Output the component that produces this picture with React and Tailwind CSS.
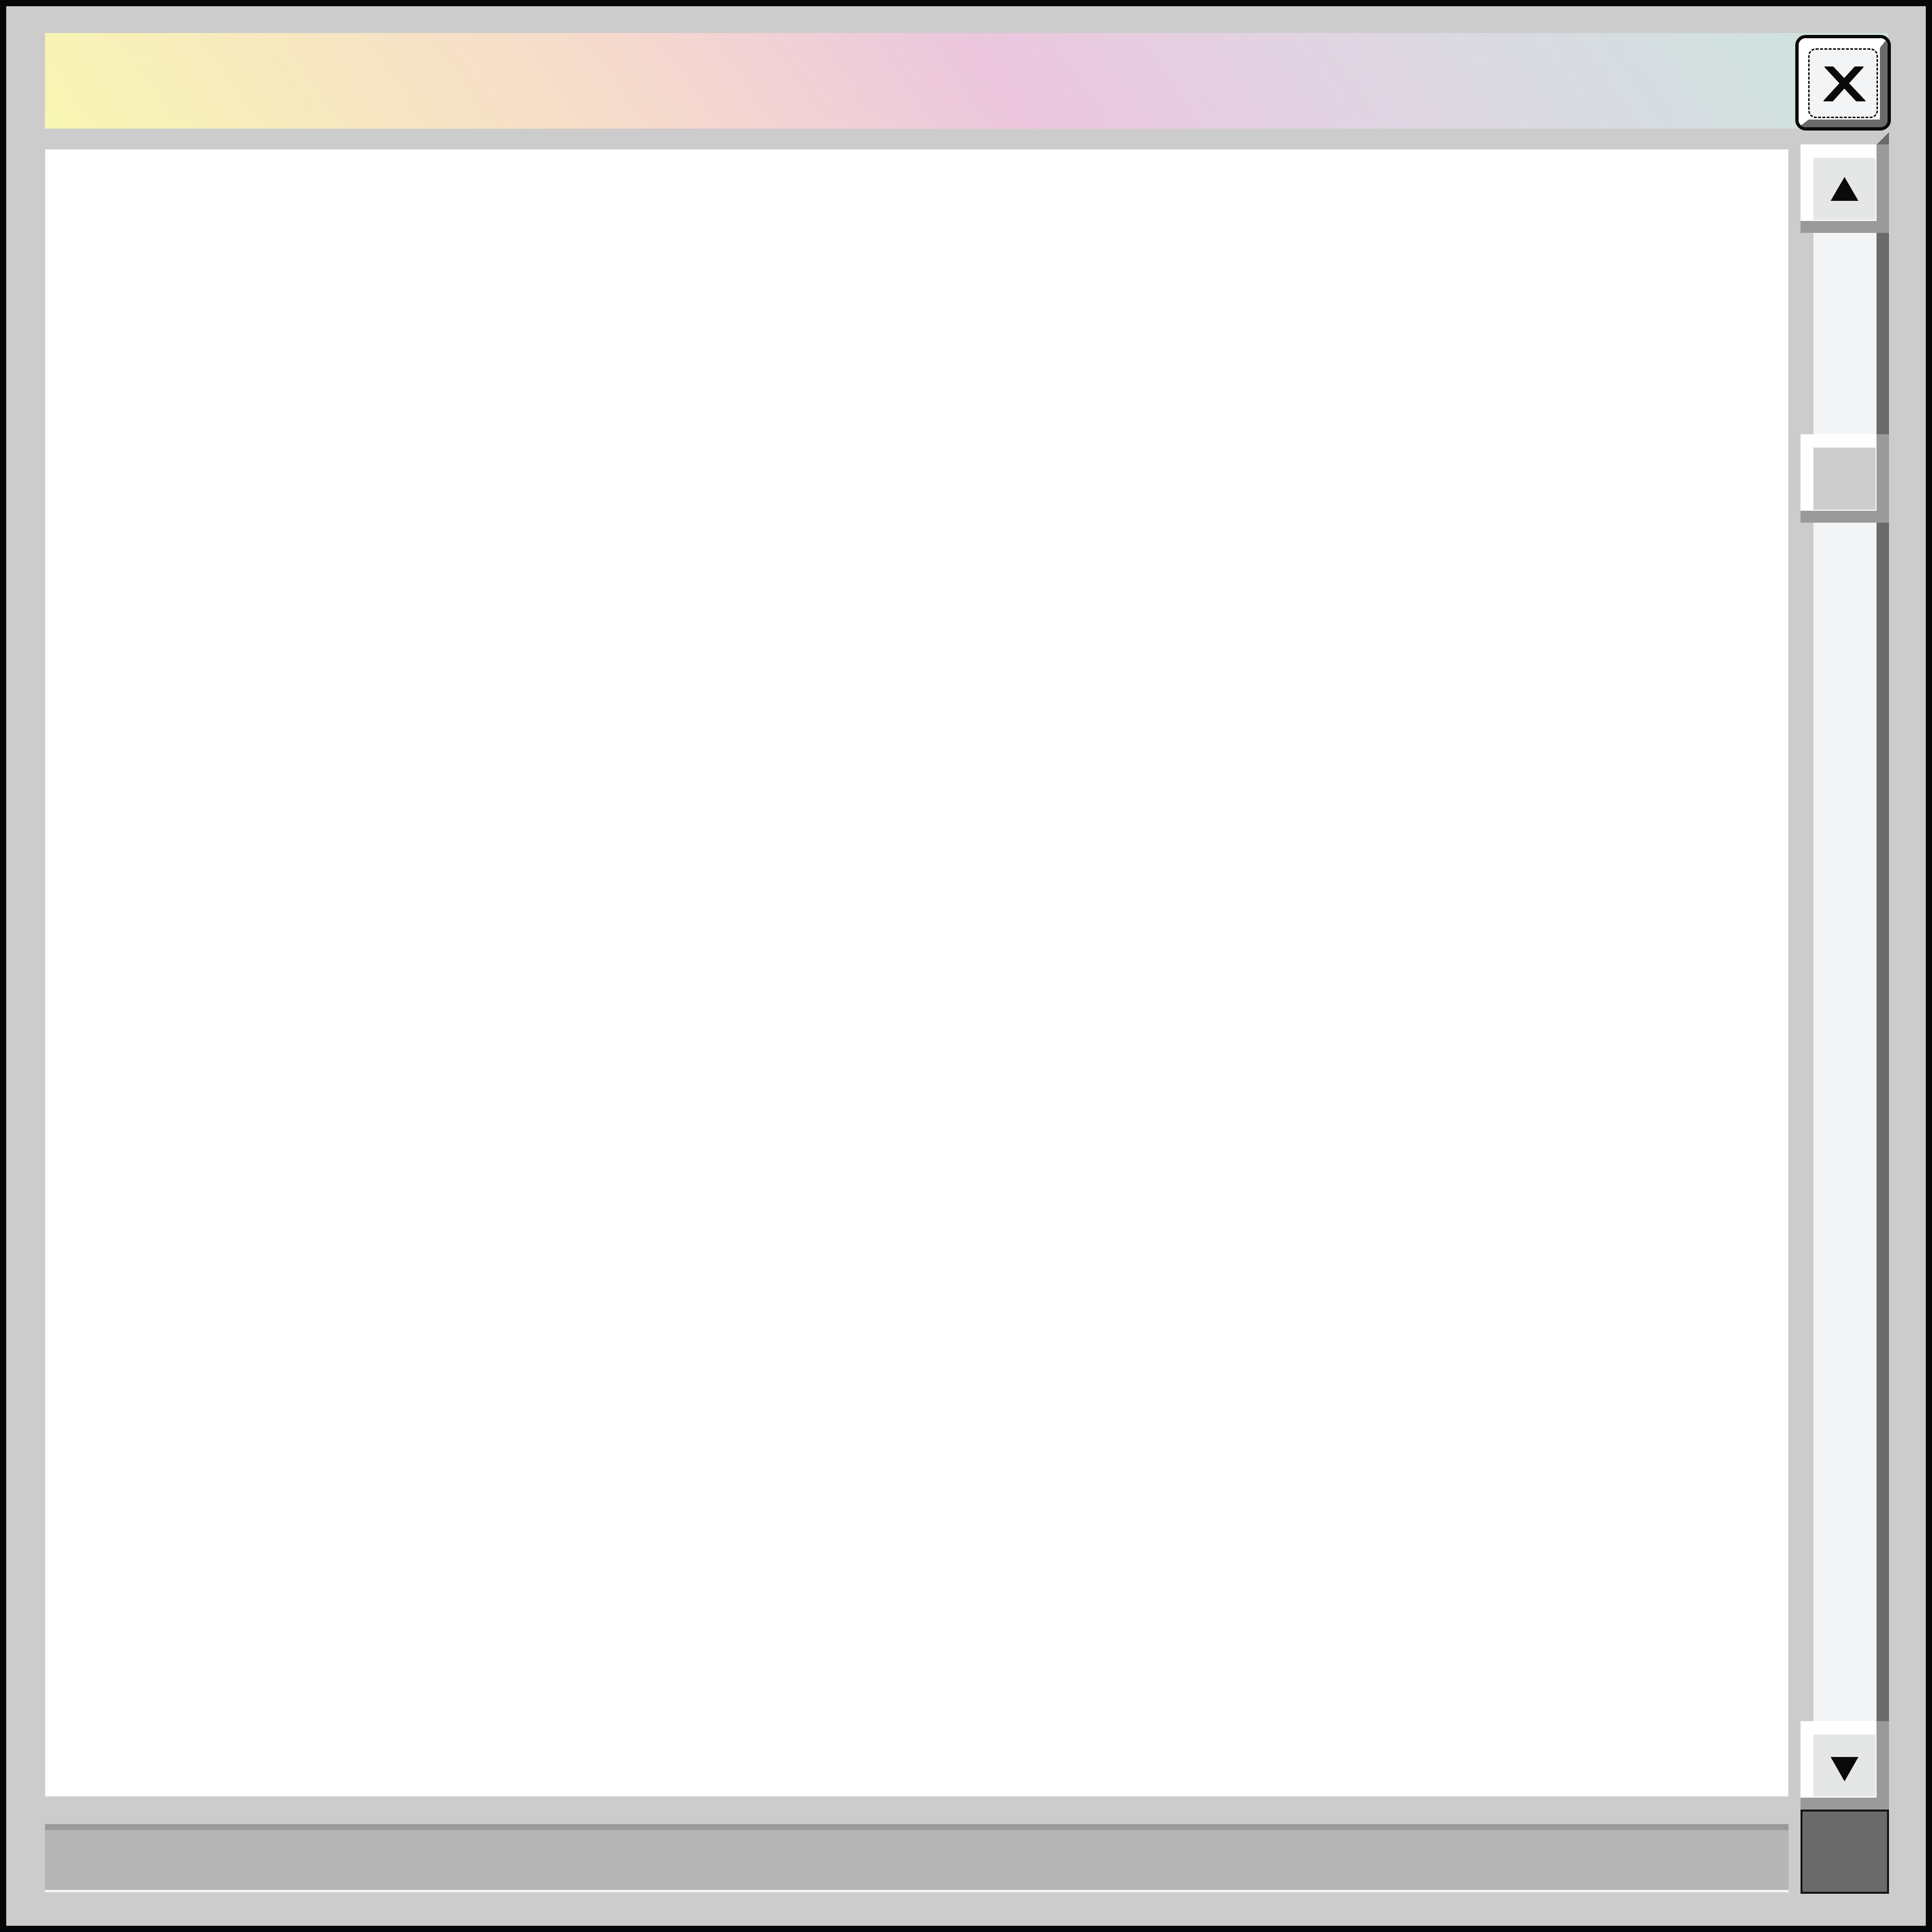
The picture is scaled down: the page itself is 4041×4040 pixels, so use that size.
import React from "react";

function ScrollButton({ face, children }) {
  return (
    <div className="w-[185px] h-[185px] shrink-0 bg-[#9a9a9a] flex">
      <div className="w-[159px] h-[160px] bg-white pl-[27px] pt-[28px] pr-[2px] pb-[2px]">
        <div className={`w-[130px] h-[130px] ${face} flex items-center justify-center`}>
          {children}
        </div>
      </div>
    </div>
  );
}

function Track({ className }) {
  return (
    <div
      className={`w-[185px] border-l-[27px] border-l-[#cccccc] border-r-[26px] border-r-[#6a6a6a] bg-[#f3f4f6] ${className}`}
    />
  );
}

export default function App() {
  return (
    <div className="w-[4041px] h-[4040px] border-[13px] border-[#060709] bg-[#cccccc] pl-[81px] pt-[56px] pr-[77px] pb-[67px] flex flex-col font-['Liberation_Sans',sans-serif]">
      {/* Title bar */}
      <div className="relative h-[200px] shrink-0 mr-[2px]">
        <div className="h-full w-full bg-[linear-gradient(55deg,#f8f6b2_0%,#f7e6c2_18%,#f6dcca_30%,#f1d0d6_42%,#ecc6de_52%,#e5d0e2_64%,#dcd8e2_76%,#d5dde0_86%,#cde5df_100%)]" />
        <div className="absolute left-[3661px] top-[4px] w-[200px] h-[200px] rounded-[22px] border-[7px] border-[#0a0a0a] overflow-hidden bg-white">
          <div className="w-full h-full rounded-[14px] border-t-[20px] border-l-[21px] border-r-[16px] border-b-[16px] border-t-white border-l-white border-r-[#6a6a6a] border-b-[#6a6a6a] bg-white">
            <div className="ml-[-1px] mt-[1px] w-[146px] h-[146px] rounded-[16px] border-[3px] border-dashed border-[#0a0a0a] bg-[#f3f4f6] flex items-center justify-center">
              <svg width="90" height="73" viewBox="0 0 90 73" className="mt-[2px] ml-[6px]">
                <polygon
                  points="4,1 21,1 88,72 70,72"
                  fill="#0a0a0a"
                  stroke="#0a0a0a"
                  strokeWidth="2"
                  strokeLinejoin="round"
                />
                <polygon
                  points="67,1 84,1 20,72 2,72"
                  fill="#0a0a0a"
                  stroke="#0a0a0a"
                  strokeWidth="2"
                  strokeLinejoin="round"
                />
              </svg>
            </div>
          </div>
        </div>
      </div>

      {/* Middle row */}
      <div className="mt-[8px] flex gap-[25px] h-[3507px] shrink-0">
        <div className="w-[3647px] mt-[35px] mb-[27px] bg-white border border-[#e2e2e2]" />
        <div className="w-[185px] h-full flex flex-col">
          <div className="h-[25px] shrink-0 flex">
            <div className="flex-1 bg-[#cccccc]" />
            <div className="w-[26px] h-full bg-[linear-gradient(to_bottom_right,#cccccc_50%,#6a6a6a_50%)]" />
          </div>
          <ScrollButton face="bg-[#e5e7e6]">
            <svg width="58" height="50" viewBox="0 0 58 50">
              <polygon points="29,0 58,50 0,50" fill="#0a0a0a" />
            </svg>
          </ScrollButton>
          <Track className="h-[421px] shrink-0" />
          <ScrollButton face="bg-[#cdcdcd]" />
          <Track className="flex-1" />
          <ScrollButton face="bg-[#e5e7e6]">
            <svg width="58" height="51" viewBox="0 0 58 51" className="mt-[14px]">
              <polygon points="0,0 58,0 29,51" fill="#0a0a0a" />
            </svg>
          </ScrollButton>
        </div>
      </div>

      {/* Bottom row */}
      <div className="flex gap-[25px] h-[176px] shrink-0">
        <div className="w-[3647px] mt-[30px] h-[143px] flex flex-col">
          <div className="h-[13px] bg-[#9a9a9a] border-t border-[#a8a8a8]" />
          <div className="flex-1 bg-[#b4b5b4]" />
          <div className="h-[5px] bg-[#f3f4f6]" />
        </div>
        <div className="w-[185px] h-[176px] border-[4px] border-[#111111] bg-[#6a6a6a]" />
      </div>
    </div>
  );
}
